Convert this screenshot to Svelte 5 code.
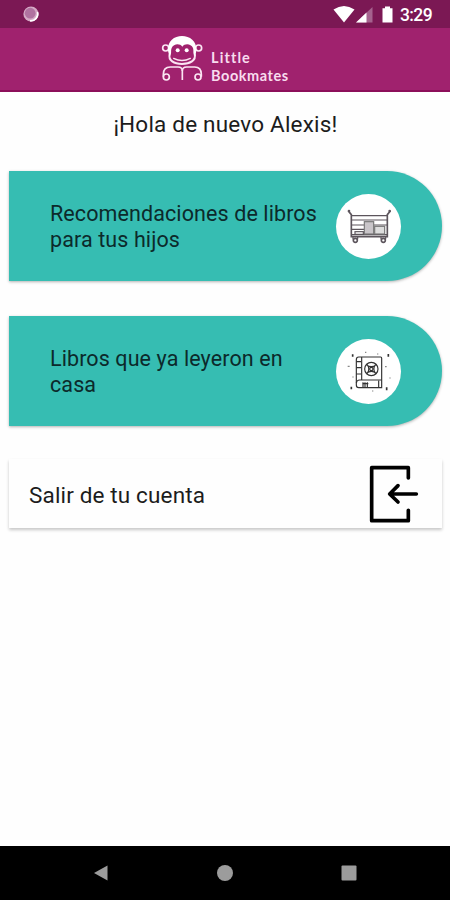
<script>
  const user = 'Alexis';

  const options = [
    { id: 'recommended', label: 'Recomendaciones de libros para tus hijos', icon: 'cart' },
    { id: 'read', label: 'Libros que ya leyeron en casa', icon: 'book' }
  ];
</script>

<div class="screen">
  <div class="status-bar">
    <svg class="recording" viewBox="0 0 18 18" width="18" height="18">
      <circle cx="9" cy="9" r="7.6" fill="#d5a9c5" />
      <circle cx="8.2" cy="8.2" r="5.4" fill="#b072a0" />
      <path d="M15.5 7A7 7 0 0 1 8 15.8" fill="none" stroke="#fff" stroke-width="1.6" />
    </svg>
    <svg class="status-icons" viewBox="0 0 62 18" width="62" height="18">
      <path d="M0.5 4.5Q11 -2.5 21.500 4.500L11 17.500Z" fill="#fff" />
      <path d="M39.500 2V17.500H23Z" fill="#a5628e" />
      <path d="M33.500 7.500V17.500H23Z" fill="#fff" />
      <path d="M52 1.500h5v1.700h2.500v14.300h-10v-14.300h2.500z" fill="#fff" />
    </svg>
    <span class="clock">3:29</span>
  </div>

  <header class="app-bar">
    <svg class="monkey" viewBox="33 22 129 141" width="43" height="47">
      <g fill="none" stroke="#fbe6f3" stroke-width="5">
        <circle cx="47" cy="61" r="9" />
        <circle cx="146" cy="61" r="9" />
        <path d="M59 80C54 98 72 109 96 109S139 98 134 80" stroke-width="6" />
        <path d="M71 92Q96 105 121 92" stroke-width="4" stroke-linecap="round" />
        <path d="M97 157V130Q97 118 84 118H61Q40 118 40 140V147" />
        <path d="M97 130Q97 118 110 118H134Q154 118 154 140V147" />
        <circle cx="49" cy="148" r="9" />
        <circle cx="144" cy="148" r="9" />
      </g>
      <path d="M54 69C52 40 73 25 96 25S141 40 139 69L136 86C127 80 132 70 129 61C123 48 105 46 97 57C89 46 71 48 65 61C61 70 67 80 58 86Z" fill="#fff" />
      <circle cx="83" cy="68" r="6" fill="#fff" />
      <circle cx="110" cy="68" r="6" fill="#fff" />
    </svg>
    <div class="brand">
      <span>Little</span>
      <span class="second">Bookmates</span>
    </div>
  </header>

  <main>
    <h1>¡Hola de nuevo {user}!</h1>

    {#each options as option (option.id)}
      <button class="option">
        <span class="option-label">{option.label}</span>
        <span class="option-icon">
          {#if option.icon === 'cart'}
            <svg viewBox="33 86 195 195" width="65" height="65" fill="none" stroke="#5c555c" stroke-width="3.500">
              <path d="M70 137L79 148V214H187V148L196 137" stroke-width="5" />
              <path d="M79 151H187M79 164H187M79 179H118M147 179H187" />
              <path d="M79 192H118M79 208H187" />
              <rect x="118" y="169" width="28" height="37" fill="#c9c5c9" stroke="#777" />
              <rect x="149" y="183" width="30" height="23" fill="#ddd" stroke="#777" />
              <rect x="90" y="199" width="25" height="8" />
              <path d="M84 215V222M98 215V222M168 215V222M182 215V222" />
              <circle cx="91" cy="225" r="6" stroke-width="5" />
              <circle cx="175" cy="225" r="6" stroke-width="5" />
              <circle cx="72" cy="137" r="2" stroke-width="4" />
              <circle cx="194" cy="137" r="2" stroke-width="4" />
            </svg>
          {:else}
            <svg viewBox="33 83 195 195" width="65" height="65" fill="none" stroke="#333" stroke-width="3.500">
              <path d="M101 137H167Q170 137 170 141V229H101Q94 229 94 221V145Q94 137 101 137Z" />
              <path d="M110 137V206M94 151H108M94 169H108M94 188H108" />
              <path d="M94 215Q95 206 104 206H170M161 208V227" />
              <path d="M114 213V228M120 213V230M127 213V228M112 217H130" />
              <circle cx="139" cy="173" r="20" />
              <circle cx="139" cy="173" r="5" />
              <path d="M124 160Q139 172 154 160M124 186Q139 174 154 186M126 159Q137 173 126 187M152 159Q141 173 152 187" />
              <path d="M83 129V136M190 128V136M79 226V234M185 228V237" stroke-width="5" />
              <path d="M120 123h4M156 128h4M68 165h6M180 166h5M82 197h4M193 200h4M141 239h4" stroke="#888" />
            </svg>
          {/if}
        </span>
      </button>
    {/each}

    <button class="logout">
      <span>Salir de tu cuenta</span>
      <svg viewBox="57 45 150 174" width="50" height="58" fill="none" stroke="#000" stroke-width="11" stroke-linecap="round" stroke-linejoin="round">
        <path d="M175 84V53H65V212H175V181" />
        <path d="M199 132H120M144 107L119 132L144 156" />
      </svg>
    </button>
  </main>

  <nav class="nav-bar">
    <svg viewBox="0 0 16 16" width="16" height="16"><path d="M1 8L14.500 0.500V15.500Z" fill="#9c9c9c" /></svg>
    <svg viewBox="0 0 16 16" width="16" height="16"><circle cx="8" cy="8" r="8" fill="#9c9c9c" /></svg>
    <svg viewBox="0 0 16 16" width="16" height="16"><rect x="0.500" y="0.500" width="15" height="15" rx="1" fill="#9c9c9c" /></svg>
  </nav>
</div>

<style>
  :global(body) {
    margin: 0;
    background: #fefefe;
  }

  .screen {
    display: flex;
    flex-direction: column;
    height: 900px;
    overflow: hidden;
    font-family: Roboto, sans-serif;
    color: #1c1c1c;
    background: #fefefe;
  }

  svg {
    display: block;
    flex: none;
  }

  .status-bar {
    display: flex;
    align-items: center;
    box-sizing: border-box;
    height: 28px;
    padding: 0 17px 0 22px;
    background: #7b1854;
  }

  .status-icons {
    margin-left: auto;
  }

  .clock {
    width: 33px;
    margin-left: 5px;
    padding-top: 2px;
    font-size: 17.5px;
    font-weight: 500;
    line-height: 26px;
    letter-spacing: -0.6px;
    color: #fff;
  }

  .app-bar {
    display: flex;
    box-sizing: border-box;
    height: 64px;
    padding: 7px 0 0 161px;
    background: #a0226e;
    border-bottom: 2px solid #8c0f5a;
  }

  .brand {
    display: flex;
    flex-direction: column;
    margin: 14px 0 0 7px;
    font-family: Lato, sans-serif;
    font-size: 14.5px;
    font-weight: 700;
    line-height: 18px;
    letter-spacing: 1.1px;
    color: #f8dcee;
  }

  .brand .second {
    letter-spacing: 0.55px;
  }

  main {
    flex: 1;
    padding: 0 8px 0 9px;
  }

  h1 {
    margin: 19px 0 34px;
    font-size: 22.5px;
    font-weight: 400;
    line-height: 26px;
    letter-spacing: 0.2px;
    text-align: center;
  }

  button {
    display: flex;
    align-items: center;
    box-sizing: border-box;
    width: 100%;
    border: 0;
    font: inherit;
    color: inherit;
    text-align: left;
    cursor: pointer;
  }

  .option {
    height: 110px;
    margin: 0 0 35px;
    padding: 0 41px;
    color: #0c2a2b;
    background: #36bdb2;
    border-radius: 0 55px 55px 0;
    box-shadow: 0 1px 3px rgba(0, 0, 0, 0.3);
  }

  .option-label {
    width: 280px;
    padding-top: 1px;
    font-size: 21.5px;
    line-height: 25.5px;
    letter-spacing: 0.1px;
  }

  .option-icon {
    flex: none;
    width: 65px;
    height: 65px;
    margin-left: 6px;
    background: #fff;
    border-radius: 50%;
  }

  .logout {
    justify-content: space-between;
    height: 69px;
    margin-top: -2px;
    padding: 0 23px 0 20px;
    font-size: 22.5px;
    letter-spacing: 0.15px;
    background: #fefefe;
    box-shadow: 0 2px 3px rgba(0, 0, 0, 0.22);
  }

  .logout span {
    padding-top: 2px;
  }

  .nav-bar {
    display: flex;
    align-items: center;
    justify-content: space-between;
    box-sizing: border-box;
    height: 54px;
    padding: 0 93px;
    background: #000;
  }
</style>
